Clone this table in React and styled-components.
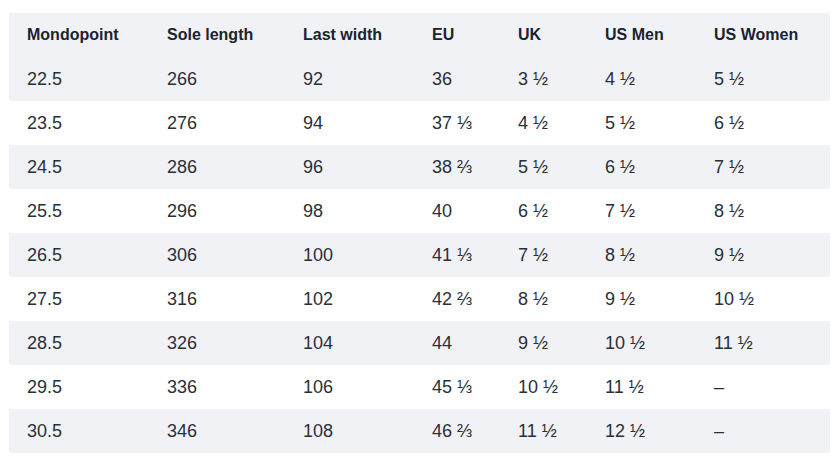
import React from 'react';
import styled, { createGlobalStyle } from 'styled-components';

const GlobalStyle = createGlobalStyle`
  body {
    margin: 0;
    background: #ffffff;
    font-family: "Liberation Sans", Arial, sans-serif;
  }
`;

const Page = styled.div`
  padding: 13px 10px 0 9px;
`;

const Table = styled.table`
  width: 821px;
  border-collapse: collapse;
  table-layout: fixed;
`;

const Col = styled.col`
  width: ${(p) => p.$w}px;
`;

const HeadRow = styled.tr`
  background: #f1f2f5;
`;

const Row = styled.tr`
  background: ${(p) => (p.$shaded ? '#f1f2f5' : '#ffffff')};
`;

const HeadCell = styled.th`
  height: 44px;
  padding: 0 0 0 18px;
  text-align: left;
  font-size: 16px;
  font-weight: 700;
  color: #1b2230;
`;

const Cell = styled.td`
  height: 44px;
  padding: 0 0 0 18px;
  font-size: 18px;
  color: #2a2f37;
`;

const columns = [
  ['Mondopoint', 140],
  ['Sole length', 136],
  ['Last width', 129],
  ['EU', 86],
  ['UK', 87],
  ['US Men', 109],
  ['US Women', 134],
];

const rows = [
  ['22.5', '266', '92', '36', '3 ½', '4 ½', '5 ½'],
  ['23.5', '276', '94', '37 ⅓', '4 ½', '5 ½', '6 ½'],
  ['24.5', '286', '96', '38 ⅔', '5 ½', '6 ½', '7 ½'],
  ['25.5', '296', '98', '40', '6 ½', '7 ½', '8 ½'],
  ['26.5', '306', '100', '41 ⅓', '7 ½', '8 ½', '9 ½'],
  ['27.5', '316', '102', '42 ⅔', '8 ½', '9 ½', '10 ½'],
  ['28.5', '326', '104', '44', '9 ½', '10 ½', '11 ½'],
  ['29.5', '336', '106', '45 ⅓', '10 ½', '11 ½', '–'],
  ['30.5', '346', '108', '46 ⅔', '11 ½', '12 ½', '–'],
];

const App = () => {
  return (
    <Page>
      <GlobalStyle />
      <Table>
        <colgroup>
          {columns.map(([name, w]) => (
            <Col key={name} $w={w} />
          ))}
        </colgroup>
        <thead>
          <HeadRow>
            {columns.map(([name]) => (
              <HeadCell key={name}>{name}</HeadCell>
            ))}
          </HeadRow>
        </thead>
        <tbody>
          {rows.map((r, i) => (
            <Row key={r[0]} $shaded={i % 2 === 0}>
              {r.map((v, j) => (
                <Cell key={j}>{v}</Cell>
              ))}
            </Row>
          ))}
        </tbody>
      </Table>
    </Page>
  );
};

export default App;
